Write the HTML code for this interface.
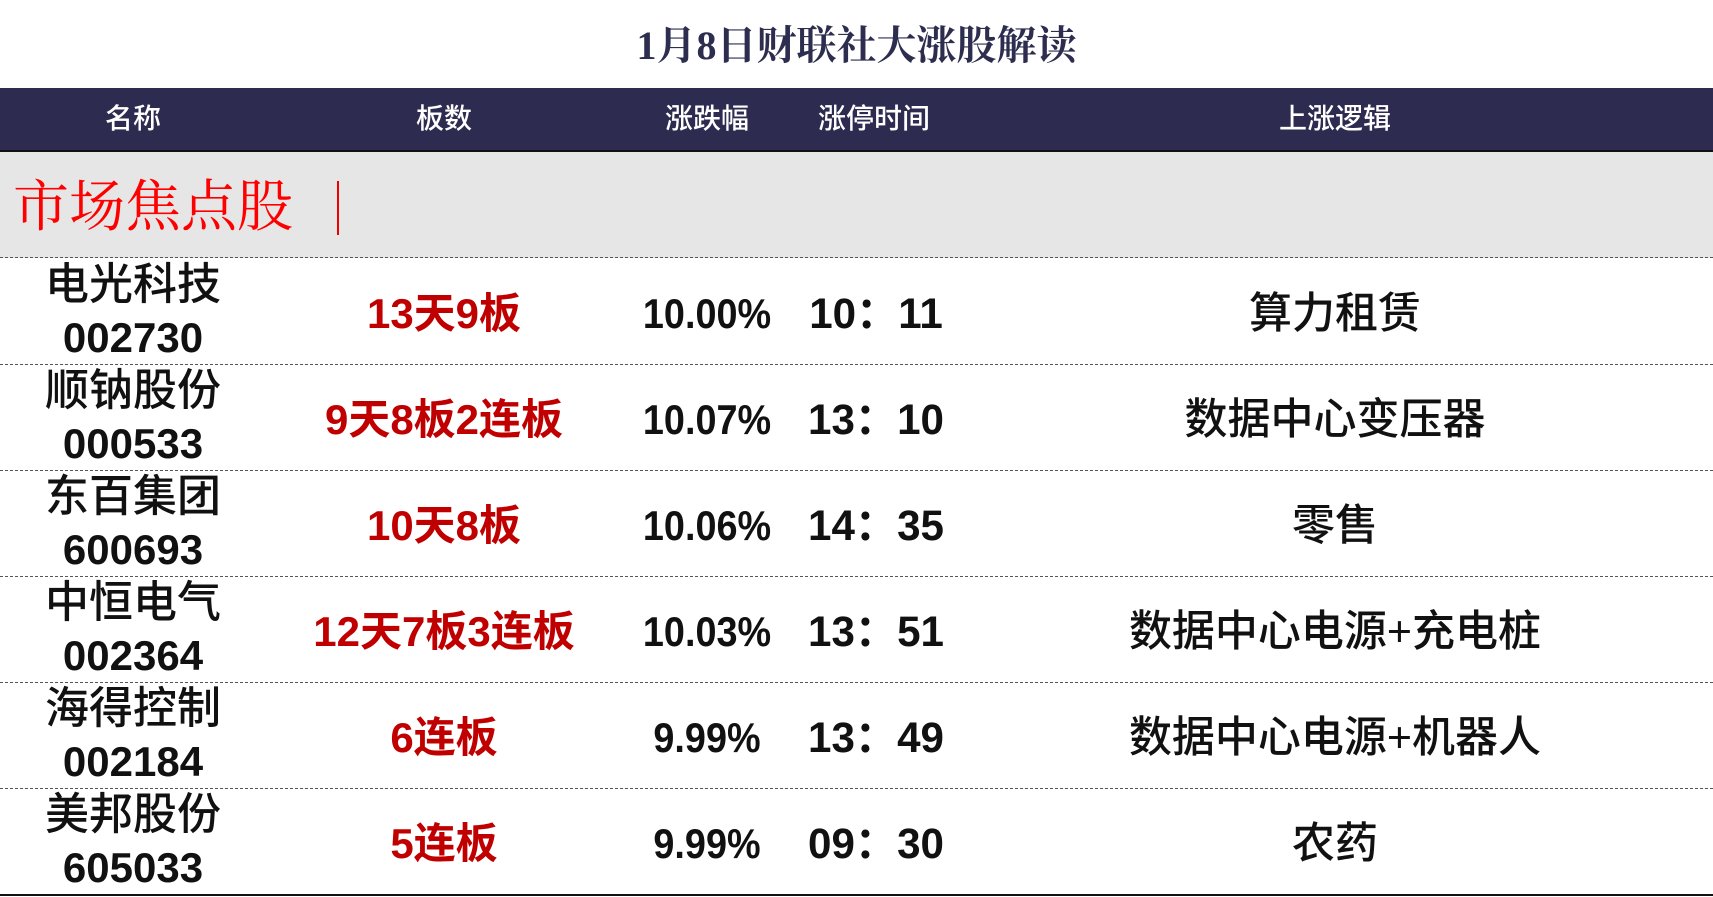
<!DOCTYPE html>
<html><head><meta charset="utf-8"><style>
body{margin:0;width:1713px;height:894px;background:#fff;position:relative;overflow:hidden;font-family:"Liberation Sans","Noto Sans CJK SC",sans-serif;}
.t{position:absolute;left:0;width:1713px;top:20px;text-align:center;font-family:"Liberation Serif","Noto Serif CJK SC",serif;font-size:40px;color:#2d2d50;font-weight:bold;line-height:52px;}
.hd{position:absolute;left:0;top:88px;width:1713px;height:62px;background:#2d2b50;border-bottom:2px solid #111;}
.hd div,.c{position:absolute;transform:translateX(-50%);white-space:nowrap;}
.hd div{color:#fff;font-size:28px;line-height:62px;top:0;font-weight:500;}
.gray{position:absolute;left:0;top:152px;width:1713px;height:105px;background:#e6e6e6;border-bottom:1px dashed #555;}
.mk{position:absolute;left:13px;top:170px;font-family:"Noto Serif CJK SC",serif;font-size:56px;color:#f00;line-height:66px;}
.bar{position:absolute;left:337px;top:181px;width:2px;height:54px;background:#e00;}
.row{position:absolute;left:0;width:1713px;height:106px;border-bottom:1px dashed #555;}
.c{top:3px;line-height:106px;font-size:43px;color:#111;font-weight:500;}
.nm{top:0;line-height:53px;text-align:center;font-size:44px;}
.nm b{font-size:42px;font-weight:bold;}
.r{color:#c00000;font-weight:bold;font-size:42px;}
.n{font-weight:bold;font-size:42px;transform:translateX(-50%) scaleX(0.9);}
.tm{font-weight:bold;font-size:43px;transform:translateX(-50%) scaleX(0.98);}
</style></head><body>
<div class="t">1月8日财联社大涨股解读</div>
<div class="hd"><div style="left:133px">名称</div><div style="left:444px">板数</div><div style="left:707px">涨跌幅</div><div style="left:874px">涨停时间</div><div style="left:1335px">上涨逻辑</div></div>
<div class="gray"></div><div class="mk">市场焦点股</div><div class="bar"></div>

<div class="row" style="top:258px"><div class="c nm" style="left:133px">电光科技<br><b>002730</b></div><div class="c r" style="left:444px">13天9板</div><div class="c n" style="left:707px">10.00%</div><div class="c tm" style="left:876px">10：11</div><div class="c" style="left:1335px">算力租赁</div></div>
<div class="row" style="top:364px"><div class="c nm" style="left:133px">顺钠股份<br><b>000533</b></div><div class="c r" style="left:444px">9天8板2连板</div><div class="c n" style="left:707px">10.07%</div><div class="c tm" style="left:876px">13：10</div><div class="c" style="left:1335px">数据中心变压器</div></div>
<div class="row" style="top:470px"><div class="c nm" style="left:133px">东百集团<br><b>600693</b></div><div class="c r" style="left:444px">10天8板</div><div class="c n" style="left:707px">10.06%</div><div class="c tm" style="left:876px">14：35</div><div class="c" style="left:1335px">零售</div></div>
<div class="row" style="top:576px"><div class="c nm" style="left:133px">中恒电气<br><b>002364</b></div><div class="c r" style="left:444px">12天7板3连板</div><div class="c n" style="left:707px">10.03%</div><div class="c tm" style="left:876px">13：51</div><div class="c" style="left:1335px">数据中心电源+充电桩</div></div>
<div class="row" style="top:682px"><div class="c nm" style="left:133px">海得控制<br><b>002184</b></div><div class="c r" style="left:444px">6连板</div><div class="c n" style="left:707px">9.99%</div><div class="c tm" style="left:876px">13：49</div><div class="c" style="left:1335px">数据中心电源+机器人</div></div>
<div class="row" style="top:788px;border-bottom:2px solid #111"><div class="c nm" style="left:133px">美邦股份<br><b>605033</b></div><div class="c r" style="left:444px">5连板</div><div class="c n" style="left:707px">9.99%</div><div class="c tm" style="left:876px">09：30</div><div class="c" style="left:1335px">农药</div></div>
</body></html>
